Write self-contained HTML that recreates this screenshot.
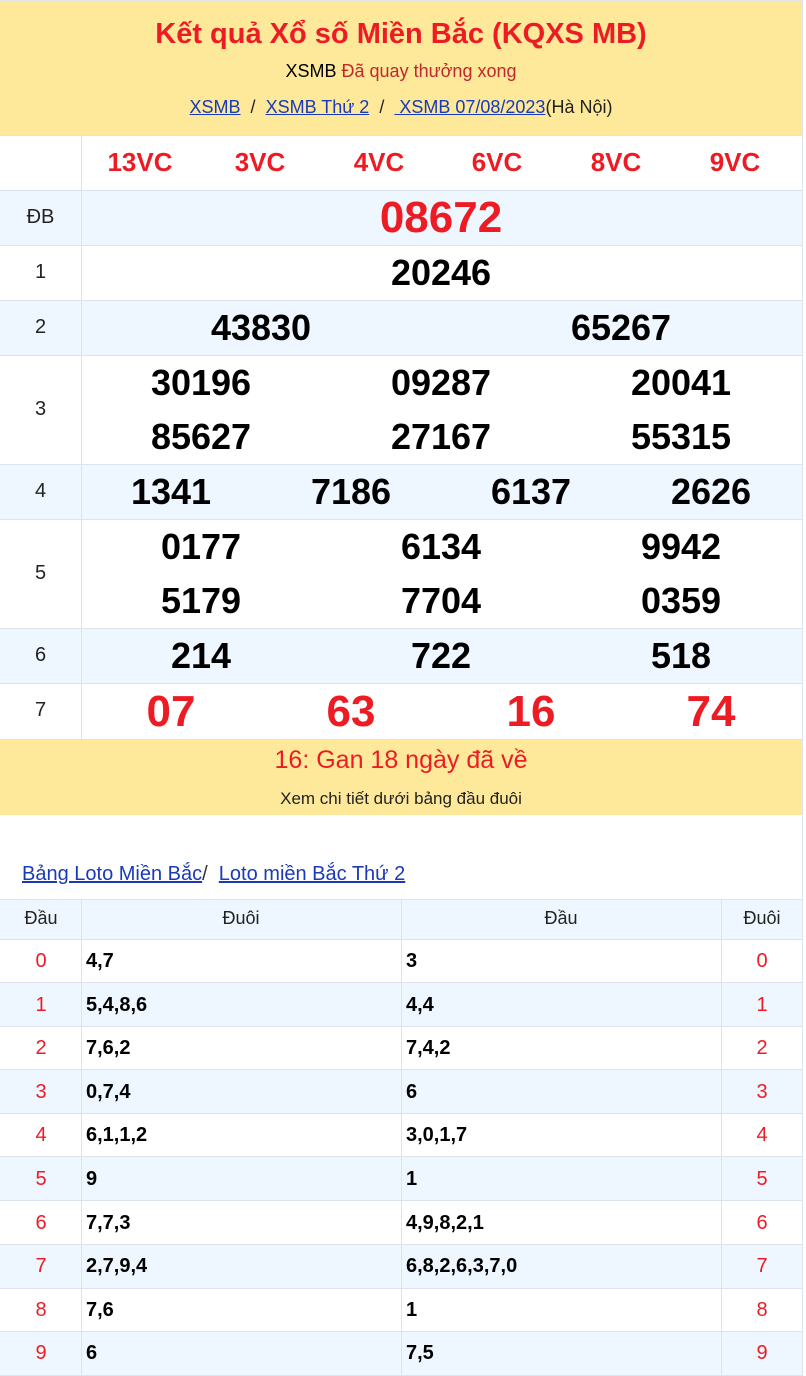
<!DOCTYPE html>
<html><head><meta charset="utf-8"><style>
*{margin:0;padding:0;box-sizing:border-box}
body{width:806px;height:1376px;background:#fff;font-family:"Liberation Sans",Arial,sans-serif;position:relative;overflow:hidden}
.a{position:absolute}
.c{position:absolute;text-align:center;transform:translateX(-50%);white-space:nowrap}
.hl{position:absolute;left:0;width:802px;height:1px;background:#dde3ea}
.vl{position:absolute;width:1px;background:#dde3ea}
.blue{position:absolute;left:0;width:802px;background:#eef6ff}
.n{font-weight:bold;font-size:36px;color:#000}
.r{color:#ed1c24}
a{color:#1a3ab7;text-decoration:underline}
.lab{position:absolute;left:0;width:81px;text-align:center;font-size:20px;color:#222}
.lt{position:absolute;font-size:20px}
.ld{font-weight:bold;color:#000}
</style></head><body>
<div class="a" style="left:0;top:0;width:802px;height:135px;background:#fee99a;border-top:2px solid #e4e4e4"></div>
<div class="c" style="left:401px;top:18px;font-size:29px;font-weight:bold;color:#ed1c24">Kết quả Xổ số Miền Bắc (KQXS MB)</div>
<div class="c" style="left:401px;top:61px;font-size:18px;color:#000">XSMB <span style="color:#c0282d">Đã quay thưởng xong</span></div>
<div class="c" style="left:401px;top:97px;font-size:18px;color:#222"><a>XSMB</a> &nbsp;/&nbsp; <a>XSMB Thứ 2</a> &nbsp;/&nbsp; <a>&nbsp;XSMB 07/08/2023</a>(Hà Nội)</div>

<div class="blue" style="top:191px;height:54px"></div>
<div class="blue" style="top:301px;height:54px"></div>
<div class="blue" style="top:465px;height:54px"></div>
<div class="blue" style="top:629px;height:54px"></div>
<div class="hl" style="top:135px"></div>
<div class="hl" style="top:190px"></div>
<div class="hl" style="top:245px"></div>
<div class="hl" style="top:300px"></div>
<div class="hl" style="top:355px"></div>
<div class="hl" style="top:464px"></div>
<div class="hl" style="top:519px"></div>
<div class="hl" style="top:628px"></div>
<div class="hl" style="top:683px"></div>
<div class="hl" style="top:739px"></div>
<div class="vl" style="left:81px;top:135px;height:605px"></div>
<div class="vl" style="left:802px;top:0;height:1376px"></div>

<div class="c r" style="left:140px;top:147px;font-size:26px;font-weight:bold">13VC</div>
<div class="c r" style="left:260px;top:147px;font-size:26px;font-weight:bold">3VC</div>
<div class="c r" style="left:379px;top:147px;font-size:26px;font-weight:bold">4VC</div>
<div class="c r" style="left:497px;top:147px;font-size:26px;font-weight:bold">6VC</div>
<div class="c r" style="left:616px;top:147px;font-size:26px;font-weight:bold">8VC</div>
<div class="c r" style="left:735px;top:147px;font-size:26px;font-weight:bold">9VC</div>

<div class="lab" style="top:206px">ĐB</div>
<div class="lab" style="top:261px">1</div>
<div class="lab" style="top:316px">2</div>
<div class="lab" style="top:398px">3</div>
<div class="lab" style="top:480px">4</div>
<div class="lab" style="top:562px">5</div>
<div class="lab" style="top:644px">6</div>
<div class="lab" style="top:699px">7</div>

<div class="c r" style="left:441px;top:193px;font-size:44px;font-weight:bold">08672</div>
<div class="c n" style="left:441px;top:252px">20246</div>
<div class="c n" style="left:261px;top:307px">43830</div>
<div class="c n" style="left:621px;top:307px">65267</div>
<div class="c n" style="left:201px;top:362px">30196</div>
<div class="c n" style="left:441px;top:362px">09287</div>
<div class="c n" style="left:681px;top:362px">20041</div>
<div class="c n" style="left:201px;top:416px">85627</div>
<div class="c n" style="left:441px;top:416px">27167</div>
<div class="c n" style="left:681px;top:416px">55315</div>
<div class="c n" style="left:171px;top:471px">1341</div>
<div class="c n" style="left:351px;top:471px">7186</div>
<div class="c n" style="left:531px;top:471px">6137</div>
<div class="c n" style="left:711px;top:471px">2626</div>
<div class="c n" style="left:201px;top:526px">0177</div>
<div class="c n" style="left:441px;top:526px">6134</div>
<div class="c n" style="left:681px;top:526px">9942</div>
<div class="c n" style="left:201px;top:580px">5179</div>
<div class="c n" style="left:441px;top:580px">7704</div>
<div class="c n" style="left:681px;top:580px">0359</div>
<div class="c n" style="left:201px;top:635px">214</div>
<div class="c n" style="left:441px;top:635px">722</div>
<div class="c n" style="left:681px;top:635px">518</div>
<div class="c r" style="left:171px;top:687px;font-size:44px;font-weight:bold">07</div>
<div class="c r" style="left:351px;top:687px;font-size:44px;font-weight:bold">63</div>
<div class="c r" style="left:531px;top:687px;font-size:44px;font-weight:bold">16</div>
<div class="c r" style="left:711px;top:687px;font-size:44px;font-weight:bold">74</div>

<div class="a" style="left:0;top:740px;width:802px;height:75px;background:#fee99a"></div>
<div class="c r" style="left:401px;top:746px;font-size:25px">16: Gan 18 ngày đã về</div>
<div class="c" style="left:401px;top:789px;font-size:17px;color:#222">Xem chi tiết dưới bảng đầu đuôi</div>

<div class="a" style="left:22px;top:863px;font-size:20px;color:#333"><a>Bảng Loto Miền Bắc</a>/ &nbsp;<a>Loto miền Bắc Thứ 2</a></div>

<div class="blue" style="top:900px;height:40px"></div>
<div class="blue" style="top:983px;height:44px"></div>
<div class="blue" style="top:1070px;height:44px"></div>
<div class="blue" style="top:1157px;height:44px"></div>
<div class="blue" style="top:1245px;height:44px"></div>
<div class="blue" style="top:1332px;height:44px"></div>
<div class="hl" style="top:899px"></div>
<div class="hl" style="top:939px"></div>
<div class="hl" style="top:982px"></div>
<div class="hl" style="top:1026px"></div>
<div class="hl" style="top:1069px"></div>
<div class="hl" style="top:1113px"></div>
<div class="hl" style="top:1156px"></div>
<div class="hl" style="top:1200px"></div>
<div class="hl" style="top:1244px"></div>
<div class="hl" style="top:1288px"></div>
<div class="hl" style="top:1331px"></div>
<div class="hl" style="top:1375px"></div>
<div class="vl" style="left:81px;top:899px;height:477px"></div>
<div class="vl" style="left:401px;top:899px;height:477px"></div>
<div class="vl" style="left:721px;top:899px;height:477px"></div>

<div class="c" style="left:41px;top:908px;font-size:18px;color:#222">Đầu</div>
<div class="c" style="left:241px;top:908px;font-size:18px;color:#222">Đuôi</div>
<div class="c" style="left:561px;top:908px;font-size:18px;color:#222">Đầu</div>
<div class="c" style="left:762px;top:908px;font-size:18px;color:#222">Đuôi</div>

<div class="c r" style="left:41px;top:950px;font-size:20px">0</div><div class="lt ld" style="left:86px;top:950px">4,7</div><div class="lt ld" style="left:406px;top:950px">3</div><div class="c r" style="left:762px;top:950px;font-size:20px">0</div>
<div class="c r" style="left:41px;top:994px;font-size:20px">1</div><div class="lt ld" style="left:86px;top:994px">5,4,8,6</div><div class="lt ld" style="left:406px;top:994px">4,4</div><div class="c r" style="left:762px;top:994px;font-size:20px">1</div>
<div class="c r" style="left:41px;top:1037px;font-size:20px">2</div><div class="lt ld" style="left:86px;top:1037px">7,6,2</div><div class="lt ld" style="left:406px;top:1037px">7,4,2</div><div class="c r" style="left:762px;top:1037px;font-size:20px">2</div>
<div class="c r" style="left:41px;top:1081px;font-size:20px">3</div><div class="lt ld" style="left:86px;top:1081px">0,7,4</div><div class="lt ld" style="left:406px;top:1081px">6</div><div class="c r" style="left:762px;top:1081px;font-size:20px">3</div>
<div class="c r" style="left:41px;top:1124px;font-size:20px">4</div><div class="lt ld" style="left:86px;top:1124px">6,1,1,2</div><div class="lt ld" style="left:406px;top:1124px">3,0,1,7</div><div class="c r" style="left:762px;top:1124px;font-size:20px">4</div>
<div class="c r" style="left:41px;top:1168px;font-size:20px">5</div><div class="lt ld" style="left:86px;top:1168px">9</div><div class="lt ld" style="left:406px;top:1168px">1</div><div class="c r" style="left:762px;top:1168px;font-size:20px">5</div>
<div class="c r" style="left:41px;top:1212px;font-size:20px">6</div><div class="lt ld" style="left:86px;top:1212px">7,7,3</div><div class="lt ld" style="left:406px;top:1212px">4,9,8,2,1</div><div class="c r" style="left:762px;top:1212px;font-size:20px">6</div>
<div class="c r" style="left:41px;top:1255px;font-size:20px">7</div><div class="lt ld" style="left:86px;top:1255px">2,7,9,4</div><div class="lt ld" style="left:406px;top:1255px">6,8,2,6,3,7,0</div><div class="c r" style="left:762px;top:1255px;font-size:20px">7</div>
<div class="c r" style="left:41px;top:1299px;font-size:20px">8</div><div class="lt ld" style="left:86px;top:1299px">7,6</div><div class="lt ld" style="left:406px;top:1299px">1</div><div class="c r" style="left:762px;top:1299px;font-size:20px">8</div>
<div class="c r" style="left:41px;top:1342px;font-size:20px">9</div><div class="lt ld" style="left:86px;top:1342px">6</div><div class="lt ld" style="left:406px;top:1342px">7,5</div><div class="c r" style="left:762px;top:1342px;font-size:20px">9</div>
</body></html>
